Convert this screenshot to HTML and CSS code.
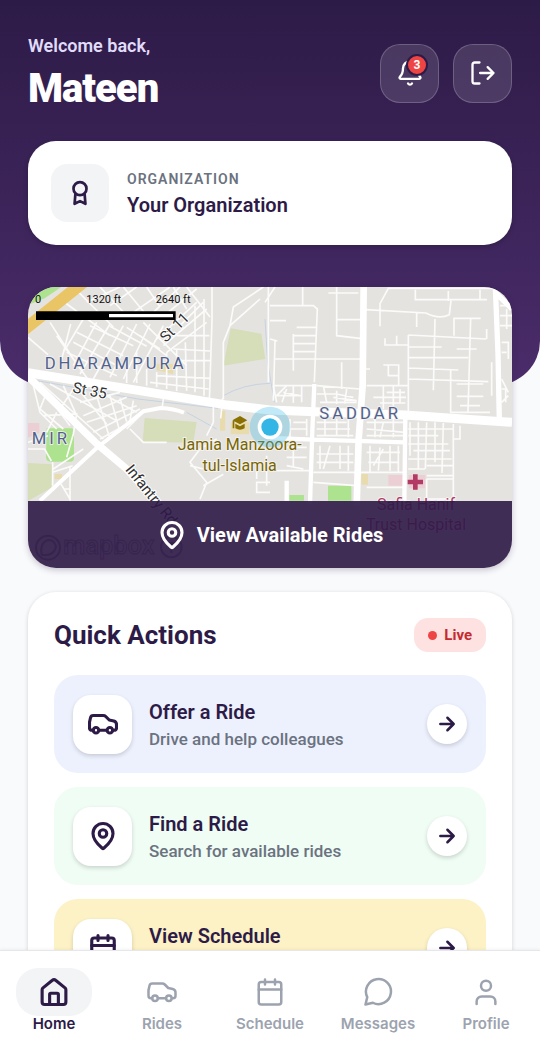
FILE: index.html
```html
<!DOCTYPE html>
<html lang="en">
<head>
  <meta charset="UTF-8">
  <meta name="viewport" content="width=device-width, initial-scale=1.0">
  <title>Home</title>
  <link rel="stylesheet" href="styles.css">
</head>
<body>

  <!-- shared icons -->
  <svg class="sprite" aria-hidden="true">
    <symbol id="i-car" viewBox="0 0 24 24">
      <path d="M4 17h-.8a2 2 0 0 1-2-2v-4.500L2 7q.4-1.800 2.200-1.800h8q1.200 0 2 .8L17 8.800l3.600.8q2.200.6 2.200 2.800V15a2 2 0 0 1-2 2H20M8.800 17h6.200"/>
      <circle cx="6.400" cy="17" r="2.200"/><circle cx="17.500" cy="17" r="2.200"/>
    </symbol>
    <symbol id="i-pin" viewBox="0 0 24 24">
      <path d="M20 10c0 5-5.500 10.200-7.400 11.800a1 1 0 0 1-1.200 0C9.500 20.200 4 15 4 10a8 8 0 0 1 16 0"/>
      <circle cx="12" cy="10" r="3"/>
    </symbol>
    <symbol id="i-calendar" viewBox="0 0 24 24">
      <rect x="3" y="4" width="18" height="18" rx="2"/>
      <path d="M8 2v4M16 2v4M3 10h18"/>
    </symbol>
    <symbol id="i-arrow" viewBox="0 0 24 24">
      <path d="M4 12h16M12.500 4.500 20 12l-7.500 7.500"/>
    </symbol>
  </svg>

  <main class="screen">
    <header class="hero">
      <div class="topbar">
        <div>
          <p class="welcome">Welcome back,</p>
          <h1>Mateen</h1>
        </div>
        <div class="top-actions">
          <button class="glass-btn" type="button" aria-label="Notifications">
            <svg class="icon" viewBox="0 0 24 24"><path d="M10.300 21a2 2 0 0 0 3.400 0M3.300 15.300A1 1 0 0 0 4 17h16a1 1 0 0 0 .7-1.700C19.400 14 18 12.500 18 8A6 6 0 0 0 6 8c0 4.500-1.400 6-2.700 7.300"/></svg>
            <span class="badge">3</span>
          </button>
          <button class="glass-btn" type="button" aria-label="Log out">
            <svg class="icon" viewBox="0 0 24 24"><path d="M9 21H5a2 2 0 0 1-2-2V5a2 2 0 0 1 2-2h4M16 17l5-5-5-5M21 12H9.500"/></svg>
          </button>
        </div>
      </div>

      <div class="org-card">
        <div class="org-icon">
          <svg class="icon" viewBox="0 0 24 24"><circle cx="12" cy="8" r="6"/><path d="M7.700 13.500 7 22l5-2.500 5 2.500-.7-8.500"/></svg>
        </div>
        <div>
          <p class="org-label">ORGANIZATION</p>
          <p class="org-name">Your Organization</p>
        </div>
      </div>
    </header>

    <section class="map-card">
      <svg class="map" viewBox="84 54 1452 843" preserveAspectRatio="xMidYMid slice" role="img" aria-label="Map">
        <rect x="84" y="54" width="1452" height="843" fill="#e5e3e0"/>

        <!-- parks and buildings -->
        <path fill="#d5deb9" d="M692 178l92 16 12 76-126 20zM434 447l156 12-10 62-152-3zM84 582l74 4-4 70-70 40z"/>
        <path fill="#ade38f" d="M140 478h72q10 0 10 10v78q0 12-12 12h-58q-14 0-14-14zM984 650h70v45h-70zM868 678h44v17h-44zM84 54h100l-50 34-50 20z"/>
        <path fill="#eccfd5" d="M84 462h34v30l-34 14zM1165 618h46v32h-46zM1226 618h50v40h-50z"/>
        <path fill="#e8dcaf" d="M470 284h50v32l-50-12zM660 425h16v60h-16zM1084 615h20v32h-20zM164 615h22v15h-22zM692 460h56v36h-56z"/>
        <path class="water" d="M670 380q60-35 140-37M795 150l8 130 20 120M560 430l90 50M84 330l330 60 240 28"/>

        <!-- side streets -->
        <g class="streets">
          <path d="M84 205l60 52M150 160l70 110M170 200l100 140M212 165l-28 110M250 150l-60 100M290 160l-70 130M330 165l-90 150M370 170l-90 160M410 165l-80 160M450 165l-80 165M490 170l-90 170"/>
          <path d="M180 90l150 110M220 54l120 120M260 100l100-46M330 110l80-56M300 54l70 75M370 54l66 80M400 130l110-76M440 54l40 60M460 130l80-76M480 150l110-90M520 54l40 66M540 170l70-70M560 54l70 90"/>
          <path d="M230 190l140 70M220 220l150 80M200 250l150 70M270 170l130 60M330 172l110 60M380 175l100 65M420 200l80 60M430 160l130 130M470 210l120-110M490 230l130-110M500 250l120-90"/>
          <path d="M636 54v100l-8 246M612 90v290M585 110v260M556 220l4 145M530 240v126M500 250v110M470 310v45M440 300v50M410 250v92M380 300v42M520 240l110 6M540 275h90M470 320l160 8M450 340l176 20M530 200h98"/>
          <path d="M670 390v-170l20-50 10-56 90-60M690 170l90-80M668 388l-6 60M640 400v60l-20 40M805 340V54M795 100l30-46"/>
          <path d="M120 340l190 170M150 345l200 110M190 350l40 90M220 360l-40 60M240 400l120-30M250 440l130-55M260 460l150-50M280 490l140-70M300 510l100-55M290 380l40 130M330 380l30 110M360 388l20 70M400 395l-10 60M230 355l90 110M300 370l110 60M490 390l-4 30"/>
          <path d="M100 350l20 80 50 50M140 370l-20 50 70 60M130 440l100-5-10 60-20 70M84 520l60-20M84 540h50l20 36M158 580v70M158 610l60-20M180 640l30 50M210 590v105M160 600l90-60M190 660h20M150 390l60 80M170 430l-30 60"/>
          <path d="M390 480l40 40h70M420 440l-40 40M600 540l-30 40 50 60-20 50M570 590l40 10M610 650l60-34M600 540l50-30M810 640h-40v30h40M770 600v30M800 560v90"/>
          <path d="M810 110h130l12 10-5 120-4 100M810 155h48M908 54v54M985 72h90M1010 54v146l70 8M1010 152h70M825 270h255M880 200h68M880 224h68M880 248h68M890 175h58M880 195v110M825 215l-5 180M1025 280v80M810 210l22 6"/>
          <path d="M820 350h120M820 350l10 50M860 350l-30 30M880 352v50M850 370l50 10M905 350v50M826 380h80M860 360l-14 40M950 350l130 10M950 375h60l50 10M970 350l10 50M1010 365v40M1040 360l-6 44M960 400h110M1000 385l70 10"/>
          <path d="M1098 122l180 10q40 20 70 5l5-42M1140 170v-66l25-46h370M1140 122v50M1250 130v44M1246 62v30h215M1345 66v30M1440 62v32M1225 198v250M1225 198l234 12M1305 150l-5 214M1225 234h100M1225 266h180M1225 297l150 6M1362 200v-52h80M1412 148l-8 280M1225 330l240 8M1352 304v126M1370 240h60M1370 345h80M1370 382h80M1380 410h60M1350 430h120M1460 180v30M1475 280v100"/>
          <path d="M1155 208v20h70M1190 200v28M1150 288h46v62M1165 320h30M1165 288v34M1100 350h125M1150 350v70M1180 350v60M1120 385h98M1160 370h55M1140 402h76M1200 360v44M1095 300h15"/>
          <path d="M1500 110h30M1500 140h36M1500 170h36M1505 220h20v50M1505 250h15M1505 330l20 40M1505 360h12v40M1505 400l20-20M1520 120v60"/>
          <path d="M1230 460v100M1255 460v140M1280 460l-4 140M1305 460v120M1330 462l-4 150M1360 465v230M1225 480h110M1225 500h90M1225 525h120M1240 545h110M1225 570h130M1280 590h80M1280 620h80M1225 600h50M1280 630v60h80M1280 630h80M1300 480h60M1360 510h20v-40"/>
          <path d="M950 460h90M950 480h100M950 500h110M975 450v50M1010 450v50M1045 450v55M1100 460h115M1100 480l115 10M1100 500h110M1125 450v55M1150 460l-10 45M1180 450v55M960 530v70M990 530l-20 70M1020 530v70M1045 530v75M950 555h110M950 580h110M1110 530v80M1140 535l-5 70M1170 530v75M1195 530v80M1100 550h100M1105 580h90M1150 540l-30 50"/>
          <path d="M870 450v60M870 480h50M920 450v50M880 460h40v40M860 535h60M860 565h60M860 590l50 10M880 535v60M830 605h100M940 610h130M940 640l130 10M1075 610h135M1100 655h110"/>
        </g>

        <!-- main roads -->
        <g class="roads">
          <path stroke="#eac565" stroke-width="36" d="M70 184L250 40"/>
          <path stroke-width="12" d="M120 695l170-158 100-78 40-32 52-10q40 2 70 14"/>
          <path stroke-width="22" d="M84 322l206 202 90 76 130 140"/>
          <path stroke-width="27" d="M84 311l330 53 260 43 136 16 135 5 270 10 321 22"/>
          <path stroke-width="20" d="M1091 54l-3 296-12 160-6 200"/>
          <path stroke-width="13" d="M943 345l-6 140-7 220M1216 440l-3 260M810 507l130 5 275 8M860 635v60"/>
          <path stroke-width="16" d="M1486 54l8 200 4 200M1486 70l50 50"/>
        </g>

        <!-- labels -->
        <g class="area-label">
          <text x="134" y="300">DHARAMPURA</text>
          <text x="958" y="450">SADDAR</text>
          <text x="95" y="526">MIR</text>
        </g>
        <g class="street-label">
          <text transform="translate(216 370) rotate(11)">St 35</text>
          <text transform="translate(498 222) rotate(-45)">St 11</text>
          <text transform="translate(374 602) rotate(51)">Infantry Rd</text>
        </g>
        <g class="place-label">
          <text x="719" y="544">Jamia Manzoora-</text>
          <text x="719" y="605">tul-Islamia</text>
        </g>
        <g class="place-label hospital">
          <text x="1248" y="724">Safia Hanif</text>
          <text x="1248" y="784">Trust Hospital</text>
        </g>
        <path fill="#897000" d="M697 454l23-13 22 13-22 12zM706 464l14 8 14-8v14q-14 8-28 0zM698 456h5v22h-5z"/>
        <path fill="#b33a64" d="M1239 616h14v16h16v14h-16v16h-14v-16h-16v-14h16z"/>

        <!-- current position -->
        <circle cx="810" cy="474" r="61" fill="#33b5e5" opacity=".3"/>
        <circle cx="810" cy="474" r="37" fill="#fff"/>
        <circle cx="810" cy="474" r="26" fill="#33b5e5"/>

        <!-- scale -->
        <g class="scale-label">
          <text x="105" y="102">0</text>
          <text x="259" y="102">1320 ft</text>
          <text x="467" y="102">2640 ft</text>
        </g>
        <path d="M108 127h419v26H108z"/>
        <path fill="#fff" d="M327 135h192v10H327z"/>

        <!-- attribution -->
        <g class="attribution">
          <circle cx="144" cy="836" r="36"/><path d="M125 857q-6-32 14-42a20 20 0 0 1 26 27q-11 20-40 15z"/>
          <circle cx="514" cy="834" r="31"/><path d="M502 822h24M514 824v28"/>
          <text x="190" y="854">mapbox</text>
        </g>
      </svg>
      <button class="map-btn" type="button">
        <svg class="icon"><use href="#i-pin"/></svg>
        View Available Rides
      </button>
    </section>

    <section class="actions-card">
      <div class="actions-head">
        <h2>Quick Actions</h2>
        <span class="live">Live</span>
      </div>

      <a class="action offer" href="#offer">
        <span class="tile"><svg class="icon"><use href="#i-car"/></svg></span>
        <span class="action-text">
          <span class="action-title">Offer a Ride</span>
          <span class="action-sub">Drive and help colleagues</span>
        </span>
        <span class="go"><svg class="icon"><use href="#i-arrow"/></svg></span>
      </a>

      <a class="action find" href="#find">
        <span class="tile"><svg class="icon"><use href="#i-pin"/></svg></span>
        <span class="action-text">
          <span class="action-title">Find a Ride</span>
          <span class="action-sub">Search for available rides</span>
        </span>
        <span class="go"><svg class="icon"><use href="#i-arrow"/></svg></span>
      </a>

      <a class="action schedule" href="#schedule">
        <span class="tile"><svg class="icon"><use href="#i-calendar"/></svg></span>
        <span class="action-text">
          <span class="action-title">View Schedule</span>
          <span class="action-sub">&nbsp;</span>
        </span>
        <span class="go"><svg class="icon"><use href="#i-arrow"/></svg></span>
      </a>
    </section>
  </main>

  <nav class="tabbar">
    <a class="tab active" href="#home">
      <span class="tab-icon"><svg class="icon" viewBox="0 0 24 24"><path d="M2.500 10.200a2 2 0 0 1 .7-1.500l7.500-6.100a2 2 0 0 1 2.600 0l7.500 6.100a2 2 0 0 1 .7 1.500V20a2 2 0 0 1-2 2h-15a2 2 0 0 1-2-2zM8.500 22v-8a1 1 0 0 1 1-1h5a1 1 0 0 1 1 1v8"/></svg></span>
      Home
    </a>
    <a class="tab" href="#rides">
      <span class="tab-icon"><svg class="icon"><use href="#i-car"/></svg></span>
      Rides
    </a>
    <a class="tab" href="#schedule">
      <span class="tab-icon"><svg class="icon"><use href="#i-calendar"/></svg></span>
      Schedule
    </a>
    <a class="tab" href="#messages">
      <span class="tab-icon"><svg class="icon" viewBox="0 0 24 24"><path d="M7.900 20.600A10 10 0 1 0 3.400 16.100L2 22Z"/></svg></span>
      Messages
    </a>
    <a class="tab" href="#profile">
      <span class="tab-icon"><svg class="icon" viewBox="0 0 24 24"><circle cx="12" cy="7" r="4"/><path d="M4.500 21.500v-2a4 4 0 0 1 4-4h7a4 4 0 0 1 4 4v2"/></svg></span>
      Profile
    </a>
  </nav>

</body>
</html>
```

FILE: styles.css
```css
* { box-sizing: border-box; }

body {
  margin: 0;
  height: 100vh;
  display: flex;
  flex-direction: column;
  font-family: Roboto, sans-serif;
  background: #f9fafc;
  color: #2d1b47;
}

h1, h2, p { margin: 0; }
a { color: inherit; text-decoration: none; }

.sprite { display: none; }

.icon {
  width: 28px;
  height: 28px;
  fill: none;
  stroke: currentColor;
  stroke-width: 2;
  stroke-linecap: round;
  stroke-linejoin: round;
}

.screen {
  flex: 1;
  min-height: 0;
  overflow-y: auto;
  scrollbar-width: none;
}

/* header */
.hero {
  padding: 34px 28px 140px;
  border-radius: 0 0 44px 44px;
  background: linear-gradient(#2d1b47, #4a2c6a);
}

.topbar {
  display: flex;
  justify-content: space-between;
  align-items: center;
  margin-bottom: 29px;
}

.welcome {
  font-size: 18px;
  line-height: 24px;
  font-weight: 600;
  color: #e0dcfa;
}

h1 {
  margin-top: 7px;
  font-size: 40px;
  line-height: 47px;
  font-weight: 900;
  letter-spacing: -1px;
  color: #fff;
}

.top-actions {
  display: flex;
  gap: 14px;
}

.glass-btn {
  position: relative;
  display: grid;
  place-items: center;
  width: 59px;
  height: 59px;
  padding: 0;
  border: 1px solid rgba(255,255,255,0.2);
  border-radius: 20px;
  background: rgba(255,255,255,0.12);
  color: #fff;
}

.badge {
  position: absolute;
  top: 9px;
  right: 10px;
  width: 22px;
  height: 22px;
  border: 2px solid #2d1b47;
  border-radius: 50%;
  background: #ef4444;
  font: 700 12px/18px Roboto, sans-serif;
  text-align: center;
}

.org-card {
  display: flex;
  align-items: center;
  gap: 18px;
  padding: 23px;
  border-radius: 28px;
  background: #fff;
  box-shadow: 0 2px 5px rgba(0,0,0,0.2);
}

.org-icon {
  display: grid;
  place-items: center;
  width: 58px;
  height: 58px;
  border-radius: 16px;
  background: #f3f4f6;
}

.org-icon .icon { width: 26px; height: 26px; stroke-width: 2.5; }

.org-label {
  padding-top: 2px;
  font-size: 14px;
  line-height: 20px;
  font-weight: 600;
  letter-spacing: 1px;
  color: #6b7280;
}

.org-name {
  margin-top: 2px;
  font-size: 20px;
  line-height: 28px;
  font-weight: 600;
}

/* map */
.map-card {
  position: relative;
  height: 281px;
  margin: -98px 28px 0;
  border-radius: 28px;
  overflow: hidden;
  box-shadow: 0 2px 6px rgba(45,27,71,0.25);
}

.map {
  display: block;
  width: 100%;
  height: 100%;
}

.streets, .roads, .water { fill: none; }
.streets { stroke: #fbfbfa; stroke-width: 5; }
.roads { stroke: #fff; stroke-linejoin: round; }
.water { stroke: #c4d3e2; stroke-width: 3; }

.area-label {
  font: 400 50px Roboto, sans-serif;
  letter-spacing: 9px;
  fill: #50618d;
  stroke: #f3f2f0;
  stroke-width: 5;
  paint-order: stroke;
}

.street-label {
  font: 400 45px Roboto, sans-serif;
  fill: #333;
  stroke: #fff;
  stroke-width: 6;
  paint-order: stroke;
}

.place-label {
  font: 400 48px Roboto, sans-serif;
  text-anchor: middle;
  fill: #786500;
  stroke: #f3f2f0;
  stroke-width: 6;
  paint-order: stroke;
}

.hospital { fill: #b33a64; }

.scale-label { font: 400 33px Roboto, sans-serif; fill: #111; }

.attribution { fill: none; stroke: #333; stroke-width: 6; opacity: 0.5; }
.attribution text { font: 500 76px Roboto, sans-serif; stroke-width: 3; }

.map-btn {
  position: absolute;
  inset: auto 0 0;
  display: flex;
  align-items: center;
  justify-content: center;
  gap: 10px;
  height: 67px;
  border: 0;
  background: rgba(45,24,71,0.9);
  color: #fff;
  font: 700 20px Roboto, sans-serif;
}

.map-btn .icon,
.tile .icon,
.tab-icon .icon {
  width: 30px;
  height: 30px;
}

.map-btn .icon,
.tile .icon { stroke-width: 2.5; }

/* quick actions */
.actions-card {
  display: flex;
  flex-direction: column;
  gap: 14px;
  margin: 24px 28px;
  padding: 26px;
  border-radius: 28px;
  background: #fff;
  box-shadow: 0 1px 4px rgba(0,0,0,0.16);
}

.actions-head {
  display: flex;
  justify-content: space-between;
  align-items: center;
  margin-bottom: 9px;
}

h2 {
  font-size: 26px;
  line-height: 34px;
  font-weight: 700;
}

.live {
  display: flex;
  align-items: center;
  gap: 7px;
  padding: 7px 14px;
  border-radius: 14px;
  background: #fee2e2;
  color: #c42b2f;
  font-size: 15px;
  line-height: 20px;
  font-weight: 700;
}

.live::before {
  content: "";
  width: 9px;
  height: 9px;
  border-radius: 50%;
  background: #ef4444;
}

.action {
  display: flex;
  align-items: center;
  gap: 17px;
  min-height: 98px;
  padding: 19px;
  border-radius: 24px;
}

.offer { background: #edf1fe; }
.find { background: #effdf4; }
.schedule { background: #fdf1c6; }

.tile, .go {
  display: grid;
  place-items: center;
  background: #fff;
  box-shadow: 0 2px 4px rgba(0,0,0,0.16);
}

.tile {
  width: 59px;
  height: 59px;
  border-radius: 18px;
}

.action-text {
  flex: 1;
  display: flex;
  flex-direction: column;
  padding-top: 2px;
}

.action-title {
  font-size: 20px;
  line-height: 28px;
  font-weight: 600;
}

.action-sub {
  font-size: 17px;
  line-height: 26px;
  font-weight: 500;
  color: #6b7280;
}

.go {
  width: 40px;
  height: 40px;
  border-radius: 50%;
}

.go .icon { width: 20px; height: 20px; stroke-width: 3; }

/* bottom tabs */
.tabbar {
  display: flex;
  padding: 17px 0 12px;
  border-top: 1px solid #e5e7eb;
  background: #fff;
  box-shadow: 0 -1px 3px rgba(0,0,0,0.05);
}

.tab {
  flex: 1;
  display: flex;
  flex-direction: column;
  align-items: center;
  font: 600 15px/16px Inter, sans-serif;
  color: #9ca3af;
}

.tab-icon {
  display: grid;
  place-items: center;
  width: 76px;
  height: 48px;
  border-radius: 22px;
}

.active { color: #2d1b47; }
.active .tab-icon { background: #f3f4f6; }
.active .tab-icon .icon { stroke-width: 2.5; }
```
